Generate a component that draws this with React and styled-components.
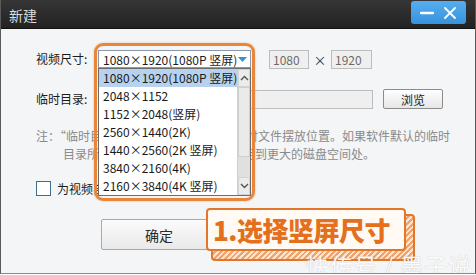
import React from "react";
import styled, { createGlobalStyle } from "styled-components";

const Global = createGlobalStyle`
  html, body { margin: 0; padding: 0; background: #ffffff; }
  body { font-family: "Noto Sans CJK SC", "Noto Sans", sans-serif; }
  * { box-sizing: border-box; }
`;

const Window = styled.div`
  position: relative;
  width: 476px;
  height: 274px;
  background: #f4f5f7;
  border-left: 1px solid #5a5a5a;
  border-right: 1px solid #5a5a5a;
  border-bottom: 1px solid #8a8a8a;
  overflow: hidden;
  font-size: 12px;
  color: #1a1a1a;
`;

const TitleBar = styled.div`
  height: 29px;
  display: flex;
  align-items: center;
  justify-content: space-between;
  padding: 0 10px 0 9px;
  background: linear-gradient(#363636, #222222);
  border-bottom: 1px solid #111;
  margin: 0 -1px;
`;

const Title = styled.span`
  color: #dcdcdc;
  font-size: 14px;
  line-height: 1;
  margin-top: 1px;
`;

const WinButtons = styled.div`
  align-self: flex-start;
  margin-top: 1px;
  width: 55px;
  height: 23px;
  border-radius: 3px;
  background: linear-gradient(#56aef0, #3792dc);
  display: flex;
  align-items: center;
  justify-content: space-around;
  padding: 0 4px;
`;

const Content = styled.div`
  padding: 21px 0 0 35px;
  display: flex;
  flex-direction: column;
`;

const Row = styled.div`
  display: flex;
  align-items: center;
  height: 18px;
  margin-top: ${(p) => p.$mt || 0}px;
`;

const Label = styled.span`
  width: 62px;
  white-space: nowrap;
  line-height: 18px;
`;

const SelectWrap = styled.div`
  position: relative;
  width: 153px;
  height: 18px;
`;

const SelectBox = styled.div`
  height: 18px;
  border: 1px solid #8798b0;
  background: #fff;
  display: flex;
  align-items: center;
  justify-content: space-between;
  padding: 0 3px 0 4px;
  white-space: nowrap;
`;

const Highlight = styled.div`
  position: absolute;
  left: -4px;
  top: -7px;
  width: 161px;
  height: 158px;
  border: 3px solid #e8873c;
  border-radius: 9px;
  box-shadow: 0 0 2px rgba(232, 135, 60, 0.6);
  pointer-events: none;
  z-index: 3;
`;

const DropList = styled.div`
  position: absolute;
  left: 0;
  top: 18px;
  width: 153px;
  height: 128px;
  border: 1px solid #6c6c6c;
  background: #fff;
  display: flex;
  z-index: 2;
`;

const Items = styled.div`
  flex: 1;
  display: flex;
  flex-direction: column;
`;

const Item = styled.div`
  height: 18px;
  line-height: 18px;
  padding-left: 4px;
  white-space: nowrap;
  overflow: hidden;
  background: ${(p) => (p.$selected ? "#b6d2ee" : "transparent")};
`;

const ScrollBar = styled.div`
  width: 17px;
  display: flex;
  flex-direction: column;
  background: #dedede;
  border-left: 1px solid #d0d0d0;
`;

const ScrollBtn = styled.div`
  height: 18px;
  background: #ececec;
  border: 1px solid #d4d4d4;
  display: flex;
  align-items: center;
  justify-content: center;
`;

const Thumb = styled.div`
  height: 70px;
  background: #eaeaea;
  border: 1px solid #cfcfcf;
`;

const Track = styled.div`
  flex: 1;
  background: #e0e0e0;
`;

const SmallInput = styled.div`
  width: ${(p) => p.$w}px;
  height: 19px;
  border: 1px solid #bdbdbd;
  background: #efefef;
  color: #6a6a6a;
  padding-left: 3px;
  line-height: 17px;
  margin-left: ${(p) => p.$ml || 0}px;
`;

const Times = styled.span`
  width: 22px;
  text-align: center;
  color: #333;
  font-size: 13px;
`;

const BrowseBtn = styled.div`
  width: 60px;
  height: 20px;
  margin-left: 10px;
  border: 1px solid #8c8c8c;
  border-radius: 2px;
  background: linear-gradient(#ffffff, #e6e6e6);
  display: flex;
  align-items: center;
  justify-content: center;
`;

const Note = styled.div`
  margin-top: 19px;
  color: #8a8a8a;
  display: flex;
  flex-direction: column;
`;

const NoteLine = styled.div`
  height: 18px;
  line-height: 18px;
  white-space: nowrap;
  padding-left: ${(p) => (p.$indent ? 27 : 0)}px;
`;

const CheckRow = styled.div`
  margin-top: 18px;
  display: flex;
  align-items: center;
  gap: 6px;
  height: 15px;
`;

const CheckBox = styled.div`
  width: 15px;
  height: 15px;
  border: 1px solid #3f6f88;
  background: #fff;
`;

const ButtonRow = styled.div`
  margin-top: 23px;
  padding-left: 65px;
  display: flex;
`;

const OkButton = styled.div`
  width: 116px;
  height: 31px;
  border: 1px solid #a9a9a9;
  border-radius: 2px;
  background: linear-gradient(#fbfbfb, #e9e9e9);
  display: flex;
  align-items: center;
  justify-content: center;
  font-size: 14px;
  color: #2a2a2a;
`;

const Callout = styled.div`
  position: absolute;
  left: 205px;
  top: 208px;
  width: 200px;
  height: 43px;
  z-index: 5;
  &::before {
    content: "";
    position: absolute;
    left: 5px;
    top: 6px;
    width: 200px;
    height: 43px;
    border: 2px solid #e2762a;
    border-radius: 4px;
    background: repeating-linear-gradient(
      -45deg,
      #f0a36a 0 2px,
      #fde5d2 2px 4px
    );
  }
`;

const CalloutBox = styled.div`
  position: relative;
  width: 100%;
  height: 100%;
  border: 2px solid #e2762a;
  border-radius: 4px;
  background: #fffaf4;
  color: #e46f1c;
  font-weight: 900;
  font-size: 26px;
  line-height: 1;
  display: flex;
  align-items: center;
  padding-left: 5px;
  white-space: nowrap;
  letter-spacing: -0.5px;
`;

const Watermark = styled.div`
  position: absolute;
  left: 305px;
  top: 248px;
  font-size: 23px;
  color: rgba(255, 255, 255, 0.95);
  text-shadow: 0 0 1px rgba(120, 120, 120, 0.5);
  white-space: nowrap;
  z-index: 6;
  letter-spacing: 1px;
`;

const Chevron = ({ up }) => (
  <svg width="9" height="6" viewBox="0 0 9 6">
    <path
      d={up ? "M1 5 L4.5 1.5 L8 5" : "M1 1 L4.5 4.5 L8 1"}
      fill="none"
      stroke="#555"
      strokeWidth="1.4"
    />
  </svg>
);

const items = [
  "1080×1920(1080P 竖屏)",
  "2048×1152",
  "1152×2048(竖屏)",
  "2560×1440(2K)",
  "1440×2560(2K 竖屏)",
  "3840×2160(4K)",
  "2160×3840(4K 竖屏)",
];

export default function App() {
  return (
    <>
      <Global />
      <Window>
        <TitleBar>
          <Title>新建</Title>
          <WinButtons>
            <svg width="14" height="14" viewBox="0 0 14 14">
              <path d="M1 7 H13" stroke="#fff" strokeWidth="2.4" strokeLinecap="round" />
            </svg>
            <svg width="14" height="14" viewBox="0 0 14 14">
              <path d="M2 2 L12 12 M12 2 L2 12" stroke="#fff" strokeWidth="1.8" strokeLinecap="round" />
            </svg>
          </WinButtons>
        </TitleBar>
        <Content>
          <Row>
            <Label>视频尺寸:</Label>
            <SelectWrap>
              <SelectBox>
                <span>1080×1920(1080P 竖屏)</span>
                <svg width="9" height="5" viewBox="0 0 9 5">
                  <path d="M0 0 H9 L4.5 5 Z" fill="#3d8fd0" />
                </svg>
              </SelectBox>
              <DropList>
                <Items>
                  {items.map((t, i) => (
                    <Item key={t} $selected={i === 0}>
                      {t}
                    </Item>
                  ))}
                </Items>
                <ScrollBar>
                  <ScrollBtn>
                    <Chevron up />
                  </ScrollBtn>
                  <Thumb />
                  <Track />
                  <ScrollBtn>
                    <Chevron />
                  </ScrollBtn>
                </ScrollBar>
              </DropList>
              <Highlight />
            </SelectWrap>
            <SmallInput $w={40} $ml={18}>1080</SmallInput>
            <Times>×</Times>
            <SmallInput $w={41}>1920</SmallInput>
          </Row>
          <Row $mt={22}>
            <Label>临时目录:</Label>
            <SmallInput $w={275}>C:\Users\Temp</SmallInput>
            <BrowseBtn>浏览</BrowseBtn>
          </Row>
          <Note>
            <NoteLine>注：“临时目录”是软件编辑视频时的临时文件摆放位置。如果软件默认的临时</NoteLine>
            <NoteLine $indent>目录所在的磁盘空间不足，建议设定到更大的磁盘空间处。</NoteLine>
          </Note>
          <CheckRow>
            <CheckBox />
            <span>为视频自动添加封面</span>
          </CheckRow>
          <ButtonRow>
            <OkButton>确定</OkButton>
          </ButtonRow>
        </Content>
        <Callout>
          <CalloutBox>1.选择竖屏尺寸</CalloutBox>
        </Callout>
        <Watermark>快传号 / 墨子说</Watermark>
      </Window>
    </>
  );
}
